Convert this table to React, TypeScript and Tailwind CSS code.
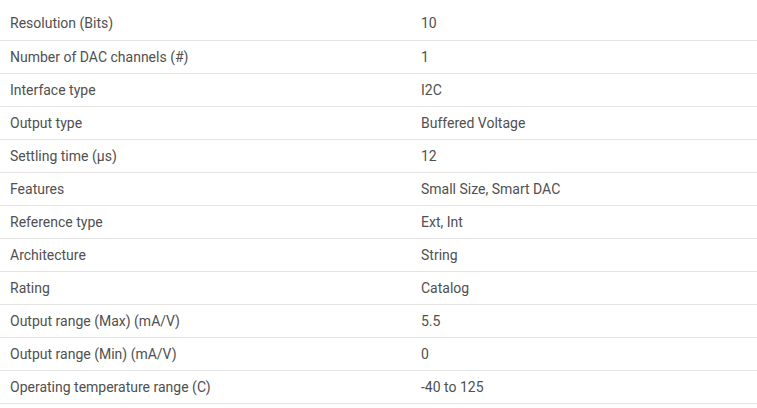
const specs: [string, string][] = [
  ['Resolution (Bits)', '10'],
  ['Number of DAC channels (#)', '1'],
  ['Interface type', 'I2C'],
  ['Output type', 'Buffered Voltage'],
  ['Settling time (µs)', '12'],
  ['Features', 'Small Size, Smart DAC'],
  ['Reference type', 'Ext, Int'],
  ['Architecture', 'String'],
  ['Rating', 'Catalog'],
  ['Output range (Max) (mA/V)', '5.5'],
  ['Output range (Min) (mA/V)', '0'],
  ['Operating temperature range (C)', '-40 to 125'],
];

export default function App() {
  return (
    <div className="w-[757px] h-[408px] bg-white pt-[7px] font-['Roboto',sans-serif] text-[14px] text-[#505050]">
      <table className="w-full border-collapse">
        <tbody>
          {specs.map(([label, value]) => (
            <tr key={label} className="h-[33px] border-b border-[#e4e4e4]">
              <td className="w-[421px] pl-[10px] pt-px align-middle">{label}</td>
              <td className="pt-px align-middle">{value}</td>
            </tr>
          ))}
        </tbody>
      </table>
    </div>
  );
}
